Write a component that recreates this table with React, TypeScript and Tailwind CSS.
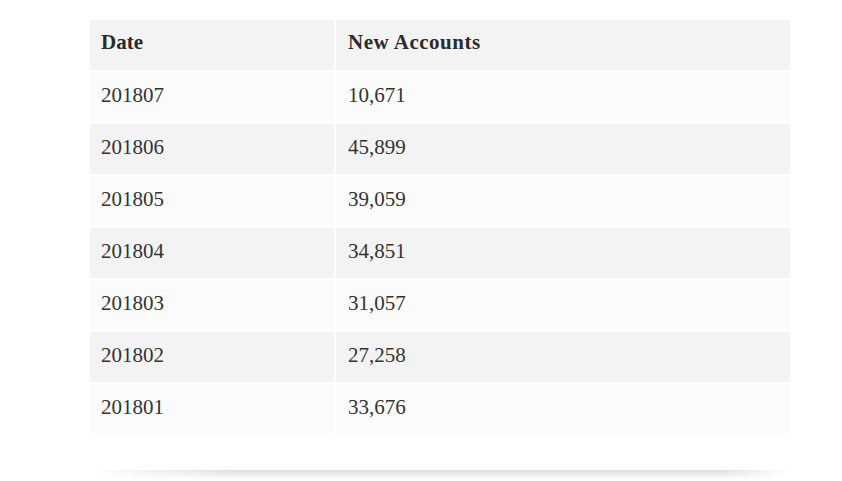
import React from "react";

const rows = [
  { date: "201807", count: "10,671" },
  { date: "201806", count: "45,899" },
  { date: "201805", count: "39,059" },
  { date: "201804", count: "34,851" },
  { date: "201803", count: "31,057" },
  { date: "201802", count: "27,258" },
  { date: "201801", count: "33,676" },
];

const App: React.FC = () => {
  return (
    <div className="min-h-screen bg-white pt-[20px] pl-[90px] text-[#333] font-['Liberation_Serif',serif] text-[21px]">
      <div className="grid w-[700px] grid-cols-[244px_454px] gap-[2px]">
        <div className="flex h-[50px] items-center bg-[#f3f3f3] px-[11px] pb-[4px] font-bold text-[#2b2b2b]">Date</div>
        <div className="flex h-[50px] items-center bg-[#f3f3f3] px-[12px] pb-[4px] font-bold text-[#2b2b2b] tracking-[0.5px]">New Accounts</div>
        {rows.map((r, i) => {
          const bg = i % 2 === 0 ? "bg-[#fbfbfb]" : "bg-[#f3f3f3]";
          return (
            <React.Fragment key={r.date}>
              <div className={`flex h-[50px] items-center px-[11px] pb-[3px] ${bg}`}>{r.date}</div>
              <div className={`flex h-[50px] items-center px-[12px] pb-[3px] ${bg}`}>{r.count}</div>
            </React.Fragment>
          );
        })}
      </div>
      <div className="mt-[36px] h-[10px] w-[700px] bg-[linear-gradient(to_bottom,rgba(0,0,0,0.13),rgba(0,0,0,0))] [mask-image:linear-gradient(to_right,transparent,black_20%,black_90%,transparent)]" />
    </div>
  );
};

export default App;
